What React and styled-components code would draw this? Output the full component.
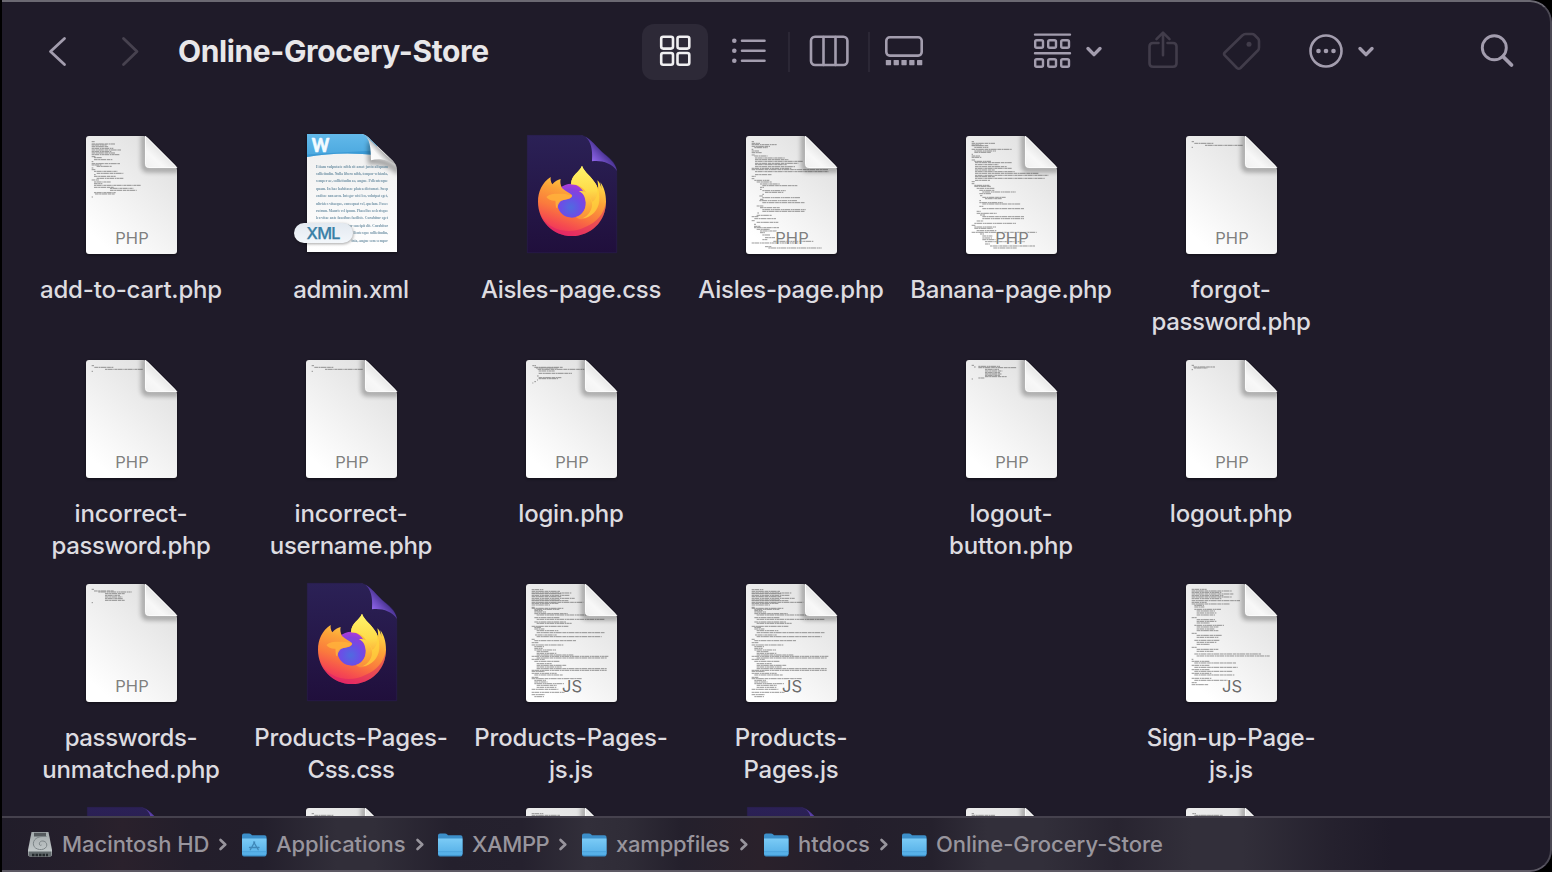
import React from "react";
import styled, { createGlobalStyle } from "styled-components";

const GlobalStyle = createGlobalStyle`
  * { box-sizing: border-box; }
  html, body { margin: 0; padding: 0; background: #000; overflow: hidden; }
  body { font-family: Inter, "Liberation Sans", sans-serif; }
`;

const Window = styled.div`
  position: relative;
  display: flex;
  flex-direction: column;
  width: 1550px;
  height: 872px;
  margin-left: 2px;
  background: #1f1b29;
  border-radius: 0 22px 22px 0;
  overflow: hidden;
  &::after {
    content: "";
    position: absolute;
    inset: 0;
    border: 2px solid #5d5964;
    border-top-color: #6b6972;
    border-right-color: #4b4853;
    border-left: 0;
    border-radius: 0 22px 22px 0;
    pointer-events: none;
  }
`;

const Toolbar = styled.header`
  display: flex;
  align-items: center;
  flex: none;
  height: 104px;
  padding-left: 42px;
  color: #a39dae;
`;

const NavButton = styled.button`
  display: flex;
  width: 28px;
  height: 40px;
  padding: 0;
  margin: 0 ${(p) => p.$after || 0}px 3px 0;
  border: 0;
  background: none;
  color: ${(p) => (p.$off ? "#47424f" : "#a39dae")};
`;

const Title = styled.h1`
  width: 464px;
  margin: 0 0 2px;
  color: #e8e7e9;
  font-size: 30px;
  font-weight: 700;
  letter-spacing: -0.38px;
  line-height: 40px;
  white-space: nowrap;
`;

const ViewButton = styled.button`
  display: flex;
  align-items: center;
  justify-content: center;
  width: ${(p) => p.$w}px;
  height: 56px;
  padding: 0 0 2px;
  border: 0;
  border-radius: 12px;
  background: ${(p) => (p.$active ? "#2d2937" : "none")};
  color: ${(p) => (p.$active ? "#f0eff1" : "#a39dae")};
`;

const Divider = styled.span`
  width: 2px;
  height: 40px;
  background: #2b2735;
`;

const Tool = styled.button`
  display: flex;
  align-items: center;
  height: 44px;
  padding: 0 0 2px;
  margin-left: ${(p) => p.$before}px;
  border: 0;
  background: none;
  color: ${(p) => (p.$off ? "#413c4a" : "#a39dae")};
`;

const Glyph = styled.svg`
  display: block;
  flex: none;
  overflow: visible;
  fill: none;
  stroke: currentColor;
  stroke-width: ${(p) => p.$s || 2.6};
  stroke-linecap: round;
  stroke-linejoin: round;
`;

const Files = styled.main`
  flex: none;
  display: grid;
  grid-template-columns: repeat(6, 220px);
  grid-auto-rows: 224px;
  height: 712px;
  padding: 26px 0 0 19px;
  overflow: hidden;
`;

const File = styled.figure`
  display: flex;
  flex-direction: column;
  align-items: center;
  margin: 0;
`;

const FileArt = styled.svg`
  display: block;
  flex: none;
  width: 128px;
  height: 128px;
  overflow: visible;
`;

const FileName = styled.figcaption`
  display: flex;
  flex-direction: column;
  align-items: center;
  margin-top: 16px;
  color: #dddce0;
  font-size: 24px;
  font-weight: 500;
  line-height: 32px;
  white-space: nowrap;
`;

const NameLine = styled.span`
  letter-spacing: ${(p) => p.$track}px;
`;

const PathBar = styled.footer`
  display: flex;
  align-items: center;
  flex: 1;
  padding: 0 0 3px 26px;
  border-top: 2px solid #45414d;
  background: linear-gradient(
    90deg,
    #211d2a 0,
    #251f2b 80px,
    #2a212c 120px,
    #231e2b 190px,
    #231f2c 260px,
    #312e39 335px,
    #312e39 372px,
    #24202d 450px,
    #25212e 520px,
    #322f3a 585px,
    #2f2c37 625px,
    #24202c 680px,
    #2a212b 760px,
    #231e2b 850px,
    #25212d 930px,
    #322f3a 985px,
    #322f3a 1040px,
    #282430 1115px,
    #322f3a 1190px,
    #322f3a 1240px,
    #25212e 1330px,
    #1f1b29 1390px
  );
  color: #98959d;
`;

const Crumb = styled.div`
  display: flex;
  align-items: center;
  flex: none;
  gap: 10px;
  width: ${(p) => p.$w}px;
`;

const CrumbName = styled.span`
  font-size: 22px;
  font-weight: 500;
  line-height: 30px;
  white-space: nowrap;
  letter-spacing: ${(p) => p.$track}px;
`;

const CrumbIcon = styled.svg`
  display: block;
  flex: none;
  width: 24px;
  height: 26px;
  overflow: visible;
`;

/* Lines of the page previews: x, y, width, in thirds of a pixel. */
const FORGOT = "65,65,8 73,70,58 105,76,115 65,82,4";
const PREVIEWS = {
  cart: "65,65,10 65,72,70 65,75,45 65,80,50 65,85,65 65,90,88 65,95,60 65,99,70 65,104,85 65,110,12 72,113,25 72,119,55 65,125,5 65,131,85 65,135,30 80,139,45 65,144,5 65,149,12 72,154,70 80,160,80 72,164,5 72,169,65 80,175,80 65,180,22 72,186,50 72,191,25 72,196,140 72,202,60 120,205,70 120,211,80 72,218,65 75,222,60 65,231,4",
  aisles: "65,65,8 65,70,25 65,74,75 65,79,55 73,83,40 65,88,5 65,93,22 65,98,30 65,105,10 73,108,40 75,114,90 75,119,100 75,124,145 75,130,130 75,134,95 75,140,120 65,145,120 65,149,230 75,155,220 75,164,50 65,169,12 65,176,8 73,181,45 80,186,45 90,192,60 97,197,105 90,202,12 90,208,5 97,212,70 105,217,55 97,223,5 88,228,12 97,233,115 90,238,10 88,242,115 97,248,128 80,258,20 90,263,60 97,269,130 97,274,128 82,279,5 80,286,45 65,290,20 73,296,65 65,302,10 80,307,65 72,313,6 72,319,20 72,323,75 80,328,40 90,333,50 90,338,15 97,345,25 105,353,30 97,359,15 130,364,120 65,369,140 105,380,20 115,384,160",
  banana: "65,65,8 65,70,70 65,75,30 65,77,50 73,82,42 65,88,120 73,93,65 73,97,50 65,103,4 65,108,25 65,112,30 65,120,10 73,124,50 75,128,110 75,134,70 75,140,95 75,145,110 75,150,60 75,155,120 75,160,190 75,166,220 75,170,60 75,175,210 75,181,45 65,185,10 65,191,8 73,196,45 73,199,50 80,205,55 88,211,45 97,216,100 88,221,35 90,227,8 97,232,70 105,236,50 88,242,5 88,248,70 97,252,115 88,259,12 97,266,125 80,274,12 80,280,60 90,285,15 97,290,125 97,296,125 80,303,20 73,310,125 65,316,12 73,321,65 73,325,55 80,332,60 65,337,195 90,342,12 97,348,30 97,354,30 97,359,40 105,365,120 105,372,15 120,378,135 130,384,70",
  forgot: FORGOT,
  login: "67,65,11 73,70,85 78,72,65 83,76,140 86,81,48 86,88,100 81,96,5 86,101,68 86,104,58 81,108,3 73,113,5 67,117,3",
  logoutButton: "65,64,8 72,69,5 85,67,65 85,71,115 105,76,42 105,81,52 105,86,45 105,90,50 105,94,45 105,98,65 85,102,18 65,105,4",
  logout: "65,64,8 70,69,65 72,72,40 65,77,4",
  unmatched: "65,64,8 72,69,60 85,72,100 105,77,60 105,82,45 105,87,52 105,92,55 105,97,60 65,104,4",
  products: "65,65,35 65,70,85 65,75,120 65,77,90 65,82,115 65,86,90 65,91,130 65,96,85 65,98,110 65,103,155 65,106,80 65,111,55 65,118,10 65,121,95 73,124,75 73,128,25 73,132,35 73,137,100 80,141,200 73,149,75 80,154,205 73,162,95 80,166,105 65,175,110 73,178,20 73,183,30 80,188,65 80,194,205 75,201,65 80,206,195 65,214,10 73,218,125 65,224,20 65,231,95 73,236,30 73,241,25 73,246,65 80,251,35 80,256,60 80,261,110 65,265,230 80,270,210 65,274,40 73,280,75 80,287,45 80,292,90 80,297,75 80,302,210 65,307,225 65,310,40 65,316,75 73,321,85 65,328,20 65,332,150 73,337,35 73,342,40 73,347,90 80,352,60 80,358,60 65,364,80 65,373,100 65,380,40 73,386,30",
  signup: "65,64,45 65,69,120 65,73,90 65,78,125 65,83,95 65,87,120 65,92,90 65,98,145 65,103,45 65,108,115 73,112,30 73,117,30 73,124,80 80,129,55 80,135,60 80,141,55 65,149,15 80,155,55 80,160,60 80,165,40 73,172,90 80,177,65 80,183,55 80,188,65 65,196,15 80,202,75 80,208,65 73,217,75 80,223,60 80,229,40 65,238,15 80,244,65 80,250,50 73,258,200 80,264,220 65,274,5 65,280,55 73,285,125 65,292,55 73,298,130 65,305,55 73,310,115 65,316,60 73,321,120 65,331,60 73,337,100 65,344,15 65,350,50",
};

function CodePreview({ name }) {
  return (
    <g transform="translate(3 -10) scale(.33333)" stroke="#4c4c4c" strokeWidth="2.7" opacity=".62">
      {PREVIEWS[name].split(" ").map((s, i) => {
        const [x, y, w] = s.split(",").map(Number);
        return (
          <path
            key={i}
            d={`M${x} ${y}h${w}`}
            strokeDasharray={i % 2 ? "11 1.5 6 1 17 2" : "7 1 15 2 4 1"}
          />
        );
      })}
    </g>
  );
}

function CodePage({ type, preview }) {
  return (
    <FileArt viewBox="0 0 128 128">
      <path d="M22.5 7H79L110 38.500V122a3 3 0 0 1-3 3H22a3 3 0 0 1-3-3V10Z" fill="#000" opacity=".45" filter="url(#soft)" />
      <g clipPath="url(#pageClip)">
        <path d="M19 6H110V124H19Z" fill="url(#paper)" />
        {preview && <CodePreview name={preview} />}
        <path d="M77 4V36q0 3.500 4 3.500H112" fill="none" stroke="#000" strokeWidth="5" opacity=".33" filter="url(#blur2)" />
      </g>
      <path d="M78.500 6.200L109.800 37.500H81.500Q78.500 37.500 78.500 34.500Z" fill="url(#curl)" stroke="#fff" strokeWidth=".9" strokeLinejoin="round" />
      {type && (
        <text x="65" y="114" textAnchor="middle" fontSize="16.500" fill={type === "JS" ? "#6c6c6c" : "#808080"} stroke="#fff" strokeOpacity=".5" strokeWidth="1.500" paintOrder="stroke" fontFamily="Inter, sans-serif">
          {type}
        </text>
      )}
    </FileArt>
  );
}

function FirefoxPage() {
  return (
    <FileArt viewBox="0 0 128 128">
      <path d="M20.300 5.300H74C84 7 87 16 95 22C103 28 109 33 109.700 41V122.700H20.300Z" fill="url(#ffPage)" stroke="#2c2154" strokeWidth=".5" />
      <path d="M74 5.300C84 7 86 20 85 31.300C94 30 105 33 110 41C108 32 102 28 95 22C87 14 82 7 74 5.300Z" fill="url(#ffCurl)" />
      <g transform="translate(3 -10) scale(.33333)">
        <circle cx="185" cy="243" r="52" fill="url(#ffGlobe)" />
        <path
          fillRule="evenodd"
          fill="url(#ffBody)"
          d="M84 245C84 215 96 188 122 171C121 180 123 187 127 193C135 184 143 179 152 177C150 185 151 193 156 204C165 213 178 219 185 224C190 229 181 236 172 238C158 241 142 242 142 256C147 279 163 293 186 293C212 293 228 272 228 247C228 215 208 192 183 193C184 163 207 159 216 137C223 157 244 169 257 191C261 197 263 202 264 209C265 200 264 190 262 181C270 187 273 198 274 206C274 199 273 193 271 187C283 203 288 223 288 245C288 304 242 348 186 348C128 348 84 302 84 245Z"
        />
        <path d="M183 193C184 163 207 159 216 137C223 157 244 169 257 191C278 227 265 273 235 291C222 299 208 301 198 291C216 287 229 269 227 247C225 229 220 220 207 214C217 212 223 214 229 219C222 202 204 193 183 193Z" fill="url(#ffFlame)" />
        <path d="M229 219C240 231 248 244 246 258C244 273 233 288 218 295C245 292 266 270 268 243C270 225 266 207 257 191C267 215 259 239 247 245C243 234 237 225 229 219Z" fill="#ffd33d" opacity=".7" />
        <path d="M91 281C114 335 183 344 226 321C262 307 282 280 287 250C288 307 240 348 186 348C143 348 105 321 91 281Z" fill="#d41b6d" opacity=".42" />
        <path d="M109 231C124 218 148 222 165 222L185 226C187 232 175 238 164 239C153 240 145 247 142 265C135 262 138 249 136 242C126 243 114 239 109 231Z" fill="#ffb13b" opacity=".85" />
      </g>
    </FileArt>
  );
}

/* Body text of the XML page; the last three lines start right of the badge. */
const LOREM = [
  ["Etiam vulputate nibh sit amet justo aliquam", 29],
  ["sollicitudin. Nulla libero nibh, tempor vehicula,", 29],
  ["semper ac, sollicitudin ac, augue. Pellentesque", 29],
  ["quam. In hac habitasse platea dictumst. Susp", 29],
  ["endisse non arcu. Integer wisi leo, volutpat eget,", 29],
  ["ultricies vitaeque, consequat vel, quelam. Fusce", 29],
  ["rutrum. Mauris vel ipsum. Phasellus scelerisque", 29],
  ["leo vitae ante faucibus facilisis. Curabitur eget", 29],
  ["tor suscipit elit. Curabitur", 61],
  ["llentesque sollicitudin,", 66.5],
  ["inia, augue sem semper", 64.5],
];

function XmlPage() {
  return (
    <FileArt viewBox="0 0 128 128">
      <path d="M20 5H76L110 38V123H20Z" fill="#000" opacity=".45" filter="url(#soft)" />
      <g clipPath="url(#xmlClip)">
        <path d="M20 4H110V122H20Z" fill="url(#xmlPaper)" />
        <path d="M20 4H90V25Q52 21 20 27Z" fill="url(#xmlBlue)" />
        <path d="M20 27Q52 21 90 25V20.500Q60 22 20 24.500Z" fill="#3192cf" opacity=".65" />
        <path d="M84 12V31Q100 30 112 42" fill="none" stroke="#000" strokeWidth="6" opacity=".36" filter="url(#blur2)" />
      </g>
      <text x="24.800" y="21.500" fontSize="19.500" fontWeight="900" fill="#f4fbff" stroke="#f4fbff" strokeWidth=".7" strokeLinejoin="round" fontFamily="Lato, sans-serif" textLength="17.500" lengthAdjust="spacingAndGlyphs">W</text>
      <g fontFamily="'Liberation Serif', serif" fontSize="3.900" fontWeight="700" fill="#5f859b" opacity=".88">
        {LOREM.map(([t, x], i) => (
          <text key={i} x={x} y={37.5 + i * 7.42} textLength={101 - x} lengthAdjust="spacingAndGlyphs">{t}</text>
        ))}
      </g>
      <path d="M76 4.200C83 7 84 19 84 30.300C93 28 103 30 110 36Q106 31 101 27L83 10Q78 5 76 4.200Z" fill="url(#curl2)" />
      <rect x="7.500" y="94" width="59" height="20" rx="10" fill="#000" opacity=".35" filter="url(#soft)" />
      <rect x="7" y="93" width="59" height="20" rx="10" fill="url(#pill)" />
      <text x="36.500" y="108.800" textAnchor="middle" fontSize="16.300" fontWeight="500" fill="#397fa6" stroke="#397fa6" strokeWidth=".25" fontFamily="Inter, sans-serif" textLength="34">XML</text>
    </FileArt>
  );
}

const DefsHost = styled.svg`
  display: block;
  width: 0;
  height: 0;
`;

function ArtDefs() {
  return (
    <DefsHost aria-hidden="true">
      <defs>
        <filter id="soft" x="-20%" y="-20%" width="140%" height="140%"><feGaussianBlur stdDeviation="1.500" /></filter>
        <filter id="blur2" x="-40%" y="-40%" width="180%" height="180%"><feGaussianBlur stdDeviation="2.400" /></filter>
        <clipPath id="pageClip"><path d="M22 6H76Q79 6 81 8L108 35Q110 37 110 40V121a3 3 0 0 1-3 3H22a3 3 0 0 1-3-3V9a3 3 0 0 1 3-3Z" /></clipPath>
        <clipPath id="xmlClip"><path d="M20 4H75Q80 5 84 10L103 28Q110 34 110 40V122H20Z" /></clipPath>
        <linearGradient id="paper" x1=".85" y1=".2" x2=".3" y2="1"><stop offset="0" stopColor="#e3e3e3" /><stop offset=".5" stopColor="#f1f1f1" /><stop offset="1" stopColor="#fff" /></linearGradient>
        <linearGradient id="curl" gradientUnits="userSpaceOnUse" x1="96" y1="20" x2="80" y2="38"><stop offset="0" stopColor="#e4e4e4" /><stop offset=".5" stopColor="#f8f8f8" /><stop offset="1" stopColor="#f2f2f2" /></linearGradient>
        <linearGradient id="curl2" gradientUnits="userSpaceOnUse" x1="96" y1="20" x2="84" y2="31"><stop offset="0" stopColor="#9f9f9f" /><stop offset=".45" stopColor="#f8f8f8" /><stop offset="1" stopColor="#fff" /></linearGradient>
        <linearGradient id="xmlPaper" x1="0" y1="0" x2="0" y2="1"><stop offset="0" stopColor="#eeeeee" /><stop offset="1" stopColor="#fff" /></linearGradient>
        <linearGradient id="xmlBlue" x1="0" y1="0" x2="0" y2="1"><stop offset="0" stopColor="#62b9ea" /><stop offset="1" stopColor="#4aa7de" /></linearGradient>
        <linearGradient id="pill" x1="0" y1="0" x2="0" y2="1"><stop offset="0" stopColor="#e3e9f0" /><stop offset="1" stopColor="#f3f7fb" /></linearGradient>
        <linearGradient id="ffPage" x1="0" y1="0" x2="0" y2="1"><stop offset="0" stopColor="#2b2156" /><stop offset="1" stopColor="#200f3c" /></linearGradient>
        <linearGradient id="ffCurl" gradientUnits="userSpaceOnUse" x1="98" y1="20" x2="85" y2="32"><stop offset="0" stopColor="#3d2a80" /><stop offset=".5" stopColor="#6c4cc0" /><stop offset="1" stopColor="#9468f0" /></linearGradient>
        <linearGradient id="ffBody" gradientUnits="userSpaceOnUse" x1="215" y1="160" x2="150" y2="345"><stop offset="0" stopColor="#ffe84a" /><stop offset=".35" stopColor="#fca238" /><stop offset=".62" stopColor="#fa7a3d" /><stop offset=".85" stopColor="#f54a50" /><stop offset="1" stopColor="#ee2f62" /></linearGradient>
        <linearGradient id="ffFlame" gradientUnits="userSpaceOnUse" x1="220" y1="140" x2="225" y2="300"><stop offset="0" stopColor="#fff46a" /><stop offset=".45" stopColor="#fedb49" /><stop offset=".75" stopColor="#fcab3a" /><stop offset="1" stopColor="#fa8a3c" /></linearGradient>
        <radialGradient id="ffGlobe" gradientUnits="userSpaceOnUse" cx="182" cy="262" r="72"><stop offset="0" stopColor="#4f6be0" /><stop offset=".4" stopColor="#6a4fe6" /><stop offset=".75" stopColor="#8a3fdc" /><stop offset="1" stopColor="#b23bd8" /></radialGradient>
        <linearGradient id="folder" x1="0" y1="0" x2="0" y2="1"><stop offset="0" stopColor="#7bcbf6" /><stop offset="1" stopColor="#53aee6" /></linearGradient>
        <linearGradient id="disk" x1="0" y1="0" x2="0" y2="1"><stop offset="0" stopColor="#a3aaac" /><stop offset="1" stopColor="#c9cfd0" /></linearGradient>
      </defs>
    </DefsHost>
  );
}

function DiskIcon() {
  return (
    <CrumbIcon viewBox="0 0 24 26">
      <path d="M3.500 1H20.500L24 19V23Q24 25.500 22 25.500H2Q0 25.500 0 23V19Z" fill="url(#disk)" />
      <path d="M6 1.800H18V5.500H6Z" fill="#555a5e" />
      <path d="M0.500 20.500H23.500V23.500Q23.500 25.500 22 25.500H2Q.5 25.500 .5 23.500Z" fill="#626a6d" />
      <path d="M4 24H20" stroke="#242a2d" strokeWidth="2.500" strokeDasharray="2.500 1" />
      <path d="M18.500 5.500C9 4.500 4.500 9 5.500 14C6.500 19 16 20.500 18.500 15.500C20 11.500 15.500 8.800 12.500 10.500C10 12.500 12 15.500 13.500 14" fill="none" stroke="#7d8588" strokeWidth="1" />
    </CrumbIcon>
  );
}

function FolderIcon({ apps }) {
  return (
    <CrumbIcon viewBox="0 0 24 26">
      <path d="M0 4.500Q0 2.500 2 2.500H7Q8.300 2.500 9.300 3.500L10 4.200H22.500Q24.500 4.200 24.500 6V23.500Q24.500 25.500 22.500 25.500H2Q0 25.500 0 23.500Z" fill="#3c8fc9" />
      <path d="M0 7.500H24.500V22.500Q24.500 24.200 22.500 24.200H2Q0 24.200 0 22.500Z" fill="url(#folder)" />
      <path d="M0 20.700H24.500" stroke="#3f98d4" strokeWidth=".6" />
      {apps && <path d="M12.700 11L8.300 18.800M11.700 11L16.200 18.800M7.500 16.500H17" fill="none" stroke="#3f87b8" strokeWidth="1.300" strokeLinecap="round" />}
    </CrumbIcon>
  );
}

const Chevron = () => (
  <Glyph width="16" height="10" $s={3.4}><path d="M2 2.500L8 8.600L14 2.500" /></Glyph>
);

/* Each name line is its text and its letter spacing. */
const FILES = [
  [[["add-to-cart.php", -0.2]], "PHP", "cart"],
  [[["admin.xml", -0.3]], "XML"],
  [[["Aisles-page.css", -0.33]], "CSS"],
  [[["Aisles-page.php", -0.27]], "PHP", "aisles"],
  [[["Banana-page.php", -0.29]], "PHP", "banana"],
  [[["forgot-", 0], ["password.php", -0.4]], "PHP", "forgot"],
  [[["incorrect-", -0.1], ["password.php", -0.4]], "PHP", "forgot"],
  [[["incorrect-", -0.1], ["username.php", -0.3]], "PHP", "forgot"],
  [[["login.php", -0.22]], "PHP", "login"],
  null,
  [[["logout-", 0], ["button.php", -0.1]], "PHP", "logoutButton"],
  [[["logout.php", -0.15]], "PHP", "logout"],
  [[["passwords-", -0.35], ["unmatched.php", -0.22]], "PHP", "unmatched"],
  [[["Products-Pages-", -0.15], ["Css.css", -0.5]], "CSS"],
  [[["Products-Pages-", -0.15], ["js.js", -0.2]], "JS", "products"],
  [[["Products-", -0.12], ["Pages.js", -0.25]], "JS", "products"],
  null,
  [[["Sign-up-Page-", -0.2], ["js.js", -0.2]], "JS", "signup"],
  [[], "CSS"],
  [[], "", "forgot"],
  [[], "", "products"],
  [[], "CSS"],
  [[], "", "banana"],
  [[], "", "login"],
];

const CRUMBS = [
  ["Macintosh HD", 214, -0.04],
  ["Applications", 196, -0.1],
  ["XAMPP", 144, -0.4],
  ["xamppfiles", 182, -0.2],
  ["htdocs", 138, 0],
  ["Online-Grocery-Store", 270, -0.03],
];

function Artwork({ type, preview }) {
  if (type === "CSS") return <FirefoxPage />;
  if (type === "XML") return <XmlPage />;
  return <CodePage type={type} preview={preview} />;
}

export default function App() {
  return (
    <>
      <GlobalStyle />
      <ArtDefs />
      <Window>
        <Toolbar>
          <NavButton $after={44}>
            <Glyph width="28" height="40" $s={2.8}><path d="M20.500 7.500L6.500 20.500L20.500 33.500" /></Glyph>
          </NavButton>
          <NavButton $off $after={34}>
            <Glyph width="28" height="40" $s={2.8}><path d="M7.500 7.500L21 20.500L7.500 33.500" /></Glyph>
          </NavButton>
          <Title>Online-Grocery-Store</Title>
          <ViewButton $active $w={66}>
            <Glyph width="32" height="32">
              <rect x="2.200" y="1.800" width="11.800" height="11.800" rx="2" />
              <rect x="18.500" y="1.800" width="11.800" height="11.800" rx="2" />
              <rect x="2.200" y="18" width="11.800" height="11.800" rx="2" />
              <rect x="18.500" y="18" width="11.800" height="11.800" rx="2" />
            </Glyph>
          </ViewButton>
          <ViewButton $w={80}>
            <Glyph width="34" height="26">
              <path d="M11 2.700H33.500M11 12.800H33.500M11 22.800H33.500" />
              <g fill="currentColor" stroke="none"><circle cx="3.300" cy="2.700" r="2.300" /><circle cx="3.300" cy="12.800" r="2.300" /><circle cx="3.300" cy="22.800" r="2.300" /></g>
            </Glyph>
          </ViewButton>
          <Divider />
          <ViewButton $w={78}>
            <Glyph width="40" height="32">
              <rect x="2" y="1.700" width="36.400" height="28.300" rx="4" />
              <path d="M14.500 2V30M26.500 2V30" />
            </Glyph>
          </ViewButton>
          <Divider />
          <ViewButton $w={68}>
            <Glyph width="38" height="30">
              <rect x="1.300" y="1.300" width="35.400" height="18.300" rx="3.500" />
              <g fill="currentColor" stroke="none">
                {[0.8, 8.6, 16.4, 24.2, 32].map((x) => <rect key={x} x={x} y="24" width="5.300" height="5.200" rx=".6" />)}
              </g>
            </Glyph>
          </ViewButton>
          <Tool $before={95}>
            <Glyph width="38" height="36" $s={2.4}>
              <path d="M2 1.600H37M2 20.300H37" />
              {[2.2, 15.2, 28.2].map((x) => (
                <React.Fragment key={x}>
                  <rect x={x} y="7.300" width="7.800" height="7.500" rx="1.500" />
                  <rect x={x} y="26.200" width="7.800" height="7.500" rx="1.500" />
                </React.Fragment>
              ))}
            </Glyph>
          </Tool>
          <Tool $before={15}><Chevron /></Tool>
          <Tool $off $before={45.5}>
            <Glyph width="30" height="38">
              <path d="M10.500 11H5Q1.500 11 1.500 14.500V31.200Q1.500 34.700 5 34.700H25Q28.500 34.700 28.500 31.200V14.500Q28.500 11 25 11H19.500M15 23.200V1M8.500 7.200L15 .7L21.500 7.200" />
            </Glyph>
          </Tool>
          <Tool $off $before={44}>
            <Glyph width="38" height="38">
              <path d="M20.500 3.300Q21.800 2 23.500 2H30Q31.500 2 32.500 3L36 6.500Q37 7.500 37 9V15.500Q37 17.200 35.800 18.500L18.500 36Q16.800 37.500 15 36L2.500 23.200Q1.500 21.800 2.800 20.500Z" />
              <circle cx="27" cy="12.300" r="2.500" fill="currentColor" stroke="none" />
            </Glyph>
          </Tool>
          <Tool $before={49.3}>
            <Glyph width="34" height="34">
              <circle cx="17" cy="17" r="15.500" />
              <g fill="currentColor" stroke="none"><circle cx="9.500" cy="17" r="2.300" /><circle cx="17" cy="17" r="2.300" /><circle cx="24.500" cy="17" r="2.300" /></g>
            </Glyph>
          </Tool>
          <Tool $before={15.2}><Chevron /></Tool>
          <Tool $before={106}>
            <Glyph width="34" height="34">
              <circle cx="14.300" cy="13.800" r="12" strokeWidth="2.900" />
              <path d="M23 22.500L31.500 31" strokeWidth="3.800" />
            </Glyph>
          </Tool>
        </Toolbar>
        <Files>
          {FILES.map((f, i) =>
            f ? (
              <File key={i}>
                <Artwork type={f[1]} preview={f[2]} />
                <FileName>
                  {f[0].map(([line, track]) => <NameLine key={line} $track={track}>{line}</NameLine>)}
                </FileName>
              </File>
            ) : (
              <File key={i} />
            )
          )}
        </Files>
        <PathBar>
          {CRUMBS.map(([name, w, track], i) => (
            <Crumb key={name} $w={w}>
              {i === 0 ? <DiskIcon /> : <FolderIcon apps={i === 1} />}
              <CrumbName $track={track}>{name}</CrumbName>
              {i < CRUMBS.length - 1 && (
                <Glyph width="8" height="12"><path d="M1.500 2L6.300 6.500L1.500 11" /></Glyph>
              )}
            </Crumb>
          ))}
        </PathBar>
      </Window>
    </>
  );
}
